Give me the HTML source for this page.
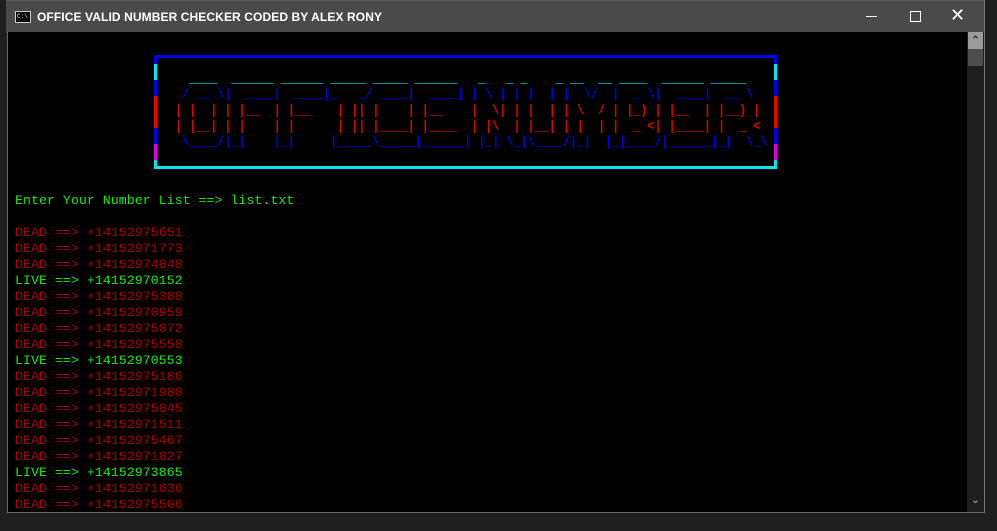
<!DOCTYPE html>
<html><head><style>
body{margin:0;width:997px;height:531px;background:#1f1f1f;position:relative;overflow:hidden;font-family:"Liberation Mono",monospace}
.title{position:absolute;left:6px;top:0;width:979px;height:32px;background:#4a4a4a;border-top:1px solid #5a5a5a}
.title .t{position:absolute;left:31px;top:9px;color:#fff;font:bold 12px "Liberation Sans",sans-serif;letter-spacing:.1px}
.icon{position:absolute;left:9px;top:10px;width:14px;height:10px;background:#000;border:1px solid #ccc;color:#fff;font:6px "Liberation Mono";line-height:10px;text-indent:1px}
.con{position:absolute;left:7px;top:32px;width:960px;height:480px;background:#000;border-left:1px solid #666}
.sb{position:absolute;left:967px;top:32px;width:17px;height:480px;background:#1e1e1e}
.frame{position:absolute;left:984px;top:0;width:1px;height:512px;background:#7a7a7a}
.bot{position:absolute;left:7px;top:512px;width:978px;height:1px;background:#6a6a6a}
.txt{position:absolute;left:15px;top:193px;font-size:13.3px;line-height:16px;white-space:pre}
.g{color:#16e816}.r{color:#a80000}
.box{position:absolute;left:154px;top:55px;width:623px;height:108px;border-top:3px solid #0000f0;border-bottom:3px solid #00e8e8}
.lb,.rb{position:absolute;top:0;width:3px;height:108px}
.lb{left:0}.rb{right:0}
.art{position:absolute;left:175px;top:71px;font-size:11.75px;line-height:16px;white-space:pre;transform:scaleY(1.2);transform-origin:0 0;line-height:13.33px;font-weight:bold}
</style></head><body>
<div class="title"><div class="icon">C:\</div><div class="t">OFFICE VALID NUMBER CHECKER CODED BY ALEX RONY</div>
<div style="position:absolute;left:860px;top:15px;width:11px;height:1px;background:#fff"></div>
<div style="position:absolute;left:904px;top:10px;width:9px;height:9px;border:1px solid #fff"></div>
<div style="position:absolute;left:944px;top:4px;color:#fff;font:18px 'Liberation Sans'">✕</div>
</div>
<div class="con"></div>
<div class="sb"><div style="position:absolute;left:1px;top:0;width:15px;height:17px;background:#9c9c9c;color:#222;font:bold 10px 'Liberation Sans';text-align:center;line-height:18px">⌃</div>
<div style="position:absolute;left:1px;top:17px;width:15px;height:17px;background:#4d4d4d"></div>
<div style="position:absolute;left:1px;top:463px;width:15px;height:17px;color:#888;font:bold 10px 'Liberation Sans';text-align:center">⌄</div></div>
<div class="frame"></div><div class="bot"></div>
<div class="box">
<div class="lb" style="background:linear-gradient(#0000f0 0 6px,#00e8e8 6px 22px,#0000f0 22px 38px,#f00000 38px 70px,#0000f0 70px 86px,#e000e0 86px 102px,#00e8e8 102px)"></div>
<div class="rb" style="background:linear-gradient(#0000f0 0 6px,#00e8e8 6px 22px,#0000f0 22px 38px,#f00000 38px 70px,#0000f0 70px 86px,#e000e0 86px 102px,#00e8e8 102px)"></div>
</div>
<div class="art"><span style="color:#00e8e8">  ____  ______ ______ _____ _____ ______   _   _ _    _ __  __ ____  ______ _____  </span>
<span style="color:#0000f0"> / __ \|  ____|  ____|_   _/ ____|  ____| | \ | | |  | |  \/  |  _ \|  ____|  __ \ </span>
<span style="color:#e00000">| |  | | |__  | |__    | || |    | |__    |  \| | |  | | \  / | |_) | |__  | |__) |</span>
<span style="color:#e00000">| |__| | |    | |      | || |____| |____  | |\  | |__| | |  | |  _ &lt;| |____| |  _ &lt; </span>
<span style="color:#0000f0"> \____/|_|    |_|     |_____\_____|______| |_| \_|\____/|_|  |_|____/|______|_|  \_\</span></div>
<div class="txt"><span class="g">Enter Your Number List ==&gt; list.txt</span>

<span class="r">DEAD ==&gt; +14152975651
DEAD ==&gt; +14152971773
DEAD ==&gt; +14152974848</span>
<span class="g">LIVE ==&gt; +14152970152</span>
<span class="r">DEAD ==&gt; +14152975388
DEAD ==&gt; +14152970959
DEAD ==&gt; +14152975072
DEAD ==&gt; +14152975558</span>
<span class="g">LIVE ==&gt; +14152970553</span>
<span class="r">DEAD ==&gt; +14152975186
DEAD ==&gt; +14152971980
DEAD ==&gt; +14152975845
DEAD ==&gt; +14152971511
DEAD ==&gt; +14152975467
DEAD ==&gt; +14152971827</span>
<span class="g">LIVE ==&gt; +14152973865</span>
<span class="r">DEAD ==&gt; +14152971636
DEAD ==&gt; +14152975506</span></div>
</body></html>
